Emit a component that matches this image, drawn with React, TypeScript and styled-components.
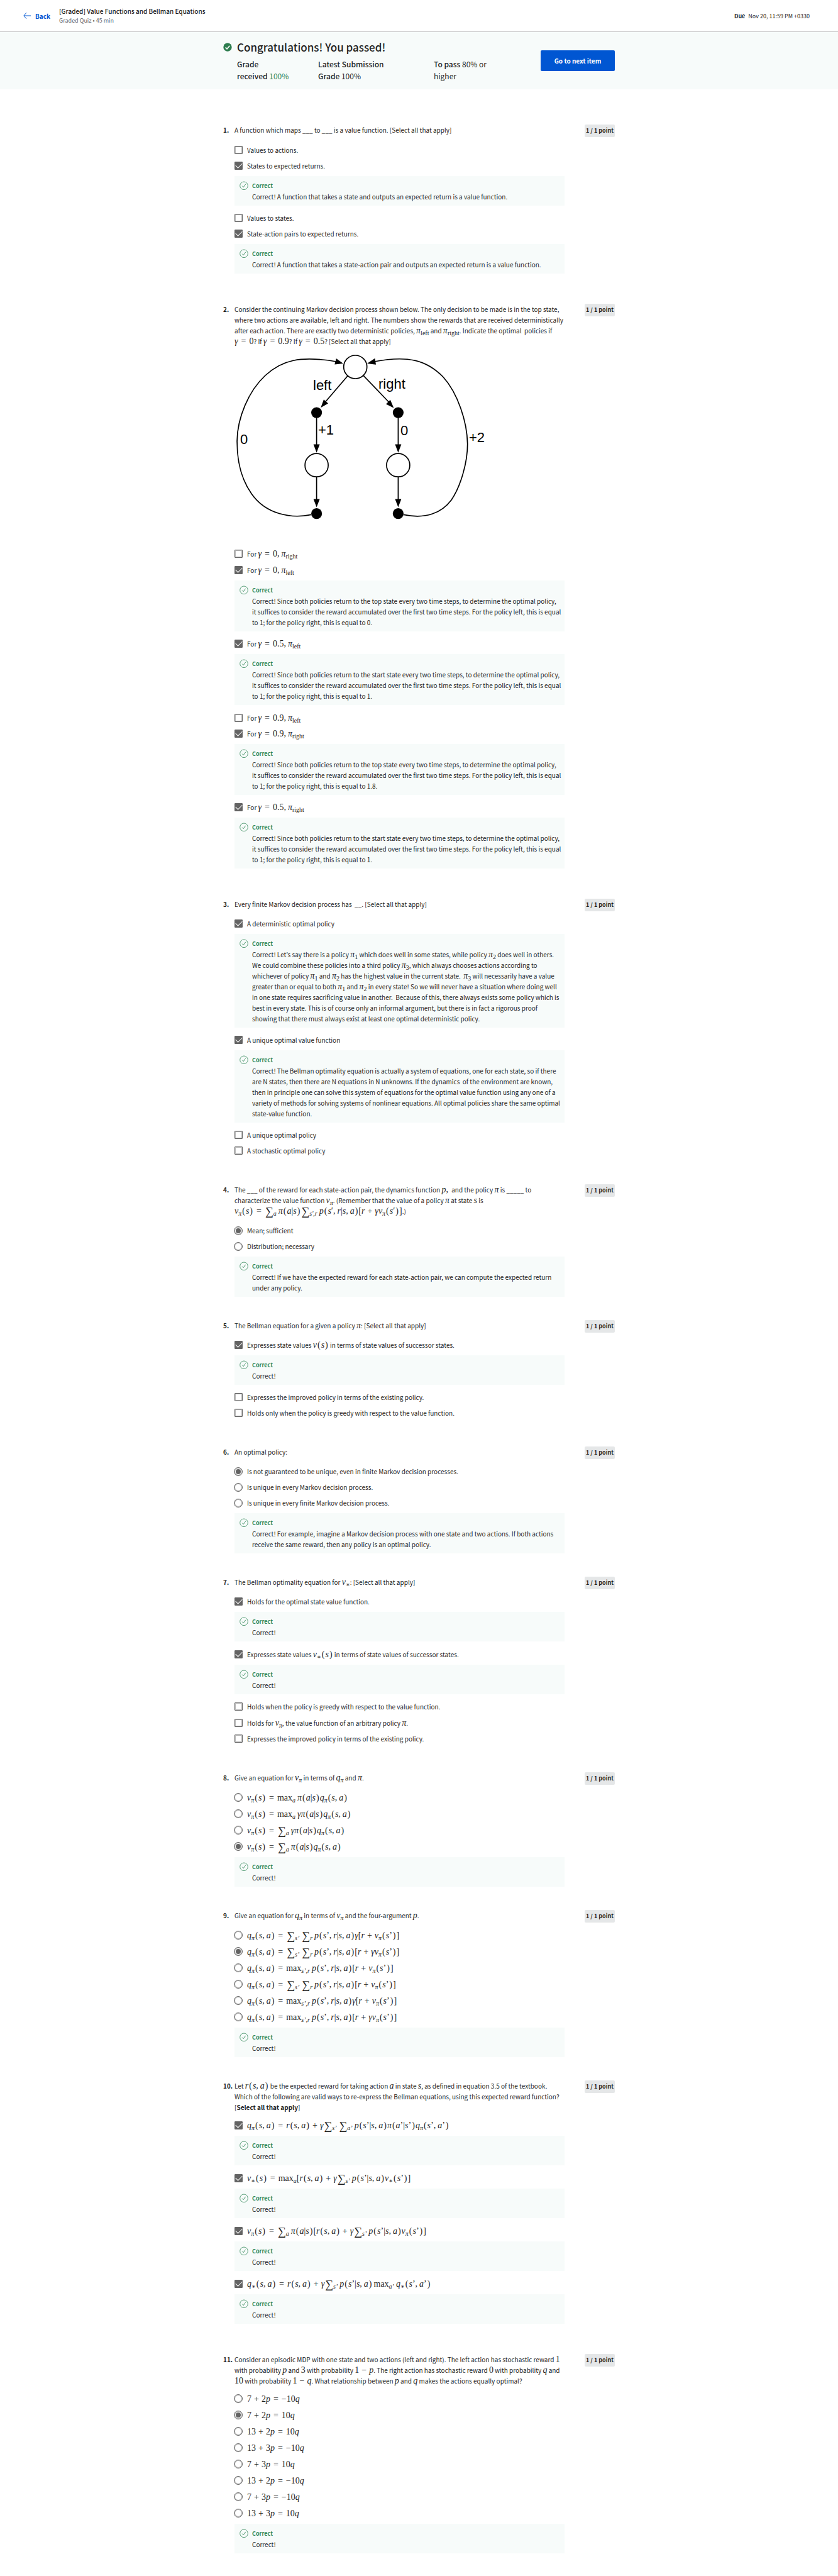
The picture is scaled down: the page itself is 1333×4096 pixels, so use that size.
import React from "react";
import styled, { createGlobalStyle } from "styled-components";

const GlobalStyle = createGlobalStyle`
  * { box-sizing: border-box; }
  body {
    margin: 0;
    background: #fff;
    color: #1f1f1f;
    font-family: "Noto Sans CJK KR", "Open Sans", sans-serif;
    font-size: 10px;
    line-height: 17px;
  }
  h1, h2, p { margin: 0; font-weight: inherit; font-size: inherit; }
`;

/* ---------- header ---------- */

const Header = styled.header`
  display: flex;
  align-items: center;
  height: 51px;
  padding: 0 45px 0 37px;
  border-bottom: 1px solid #bdbdbd;
`;

const BackLink = styled.a`
  display: flex;
  align-items: center;
  gap: 7px;
  margin-right: 14px;
  color: #0056d2;
  font-size: 10px;
  font-weight: 700;
  text-decoration: none;
`;

const Titles = styled.div`
  flex: 1;
  line-height: 15px;
`;

const QuizTitle = styled.h1`
  font-weight: 500;
`;

const QuizMeta = styled.p`
  color: #666;
  font-size: 9px;
`;

const Due = styled.p`
  font-size: 9px;

  strong { margin-right: 3px; }
`;

/* ---------- result banner ---------- */

const Banner = styled.section`
  height: 91px;
  background: #f7fbfa;
`;

const BannerInner = styled.div`
  display: flex;
  align-items: center;
  justify-content: space-between;
  width: 100%;
  max-width: 623px;
  height: 100%;
  margin: 0 auto;
`;

const Result = styled.div`
  display: grid;
  grid-template-columns: 14px auto;
  column-gap: 8px;
  align-items: center;
`;

const ResultTitle = styled.h2`
  font-size: 17px;
  font-weight: 500;
  line-height: 24px;
`;

const Grades = styled.div`
  display: flex;
  grid-column: 2;
  padding-top: 5px;
  font-size: 12px;
  line-height: 19px;
`;

const Grade = styled.p<{ $width: number; $gap: number }>`
  width: ${(p) => p.$width}px;
  margin-right: ${(p) => p.$gap}px;

  strong { font-weight: 500; }
`;

const Passed = styled.span`
  color: #2e8555;
`;

const NextButton = styled.button`
  width: 118px;
  height: 33px;
  border: 0;
  border-radius: 2px;
  background: #0056d2;
  color: #fff;
  font: 700 10px "Noto Sans CJK KR", "Open Sans", sans-serif;
`;

/* ---------- questions ---------- */

const Quiz = styled.main`
  max-width: 623px;
  margin: 0 auto;
  padding: 56px 0 0;
`;

const QuestionGrid = styled.section<{ $gap: number }>`
  display: grid;
  grid-template-columns: 18px minmax(0, 525px) 1fr;
  align-items: start;
  margin-bottom: ${(p) => p.$gap}px;
`;

const Num = styled.span`
  font-weight: 700;
  white-space: nowrap;
`;

const Points = styled.span`
  justify-self: end;
  width: 48px;
  height: 20px;
  border-radius: 2px;
  background: #e5e7e8;
  font-weight: 700;
  font-size: 9px;
  line-height: 20px;
  text-align: center;
  white-space: nowrap;
`;

const Prompt = styled.div<{ $snug?: boolean }>`
  margin-bottom: ${(p) => (p.$snug ? 9 : 12)}px;
`;

const OptionLabel = styled.label<{ $tall?: boolean }>`
  display: flex;
  align-items: center;
  height: ${(p) => (p.$tall ? 26 : 25)}px;
  padding: 2px 0 6px;
  white-space: nowrap;
`;

const CheckInput = styled.input`
  appearance: none;
  display: grid;
  place-items: center;
  flex: none;
  width: 13px;
  height: 13px;
  margin: 0 7px 0 0;
  border: 1px solid #666;
  border-radius: 1px;
  box-shadow: inset 0 0 0 1px #b4b4b4;

  &:checked {
    background: #636363;
    box-shadow: none;
  }

  &:checked::after {
    content: "";
    width: 5px;
    height: 9px;
    margin-top: -3px;
    border: solid #fff;
    border-width: 0 1px 1px 0;
    transform: rotate(45deg);
  }
`;

const RadioInput = styled.input`
  appearance: none;
  display: grid;
  place-items: center;
  flex: none;
  width: 14px;
  height: 14px;
  margin: 0 7px 0 -1px;
  border: 1px solid #666;
  border-radius: 50%;
  box-shadow: inset 0 0 0 1px #b4b4b4;

  &:checked::after {
    content: "";
    width: 8px;
    height: 8px;
    border-radius: 50%;
    background: #636363;
  }
`;

const Feedback = styled.div<{ $spaced: boolean }>`
  display: grid;
  grid-template-columns: 14px 1fr;
  column-gap: 6px;
  margin: 2px 0 ${(p) => (p.$spaced ? 9 : 0)}px;
  padding: 8px 5px 6px 8px;
  background: #f7fbfa;
`;

const FeedbackTitle = styled.p`
  color: #2e8555;
  font-size: 9px;
  font-weight: 700;
  line-height: 16px;
`;

const Diagram = styled.svg`
  display: block;
  width: 402px;
  height: 297px;
  margin-top: 9px;
  font: 22px "Liberation Sans", Arial, sans-serif;
`;

/* ---------- math ---------- */

const Formula = styled.span`
  font-family: "Liberation Serif", "DejaVu Serif", serif;
  font-size: 14px;
  line-height: 0;
  white-space: nowrap;

  sub {
    font-size: 10px;
    line-height: 0;
    vertical-align: -3px;
  }
`;

const Rel = styled.span`
  margin: 0 5px;
`;

const Bin = styled.span`
  margin: 0 4px;
`;

const Comma = styled.span`
  margin-right: 3px;
`;

const Paren = styled.span`
  margin: 0 1px;
`;

const Sum = styled.span`
  margin-left: 1px;
  font-size: 18px;
  vertical-align: -2px;
`;

const MaxAfterFactor = styled.span`
  margin-left: 2px;
`;

const AfterSub = styled.span`
  margin-right: 3px;
`;

/* Sets a compact TeX-like string: letters go italic, _{..} is a subscript,
   S is a summation sign, ~ is a unary minus. */
function Tex({ children }: { children: string }) {
  const parts = children.match(/_\{[^}]*\}|max|\d[\d.]*|[^\s]/g) ?? [];
  let operator = false;
  return (
    <Formula>
      {parts.map((t, i) => {
        if (t.startsWith("_{")) {
          const body = t.slice(2, -1);
          const upright = /^(left|right|\d|∗)$/.test(body);
          const sub = <sub key={i}>{upright ? body : <i>{body}</i>}</sub>;
          const spaced = operator && parts[i + 1] !== "[";
          operator = false;
          return spaced ? <AfterSub key={i}>{sub}</AfterSub> : sub;
        }
        if (t === "S") {
          operator = true;
          return <Sum key={i}>∑</Sum>;
        }
        if (t === "max") {
          operator = true;
          return parts[i - 1] === ")" ? <MaxAfterFactor key={i}>max</MaxAfterFactor> : <span key={i}>max</span>;
        }
        operator = false;
        if (t === "=") return <Rel key={i}>=</Rel>;
        if (t === "+") return <Bin key={i}>+</Bin>;
        if (t === "-") return <Bin key={i}>−</Bin>;
        if (t === "~") return <span key={i}>−</span>;
        if (t === ",") return <Comma key={i}>,</Comma>;
        if (t === "(" || t === ")") return <Paren key={i}>{t}</Paren>;
        if (/[a-zπγ]/.test(t)) return <i key={i}>{t}</i>;
        return <span key={i}>{t}</span>;
      })}
    </Formula>
  );
}

/* ---------- drawings ---------- */

const ArrowLeft = () => (
  <svg width="12" height="12" viewBox="0 0 12 12" fill="none" stroke="#0056d2" aria-hidden="true">
    <path d="M12 6H1M5 1.2L.8 6L5 10.8" />
  </svg>
);

const PassedIcon = () => (
  <svg width="14" height="14" viewBox="0 0 13 13" aria-hidden="true">
    <circle cx="6.5" cy="6.5" r="6.2" fill="#2e7d4f" />
    <path d="M3.4 6.8L5.6 9L9.6 4.4" fill="none" stroke="#fff" strokeWidth="1.5" />
  </svg>
);

const CorrectIcon = () => (
  <svg width="14" height="16" viewBox="0 0 14 16" fill="none" stroke="#2e8555" aria-hidden="true">
    <circle cx="7" cy="7.3" r="6.3" strokeWidth=".8" />
    <path d="M4.2 7.6L6.2 9.6L9.8 4.8" strokeWidth=".9" />
  </svg>
);

const MarkovDiagram = () => (
  <Diagram viewBox="0 0 402 297" role="img" aria-label="Continuing Markov decision process">
    <g fill="none" stroke="#000" strokeWidth="1.7">
      <path d="M122 258.4C90 265 50 258 27 225C8 198 4 165 4.1 141C4.5 105 22 62 49 37C75 13 104 5 162 15" />
      <path d="M269 258.4C305 266 330 255 345 235C360 213 370.7 175 370.7 146C370 110 355 65 332 39.5C305 12 275 5 222 15" />
      <circle cx="192.2" cy="23.5" r="18.5" />
      <circle cx="130.6" cy="179.7" r="18.5" />
      <circle cx="260.4" cy="179.7" r="18.5" />
      <path d="M180 37.8L142 82M205 37.1L249 83M130.6 104V148M260.4 104V148M130.6 198V236M260.4 198V236" />
    </g>
    <g fill="#000">
      <circle cx="130.6" cy="96.1" r="8.6" />
      <circle cx="260.4" cy="96.1" r="8.6" />
      <circle cx="130.6" cy="256.7" r="8.6" />
      <circle cx="260.4" cy="256.7" r="8.6" />
      <path d="M173 17.9L161.8 10.1L159.3 19.5ZM210.9 17.9L223.4 9.8L225 19.8Z" />
      <path d="M137.2 88.3L142 75.3L149 81.5ZM253.4 88.7L247.8 75.8L241 82.4Z" />
      <path d="M130.6 159.8L125.6 146.6H135.6ZM260.4 159.8L255.4 146.6H265.4Z" />
      <path d="M130.6 246.6L125.6 233.4H135.6ZM260.4 246.6L255.4 233.4H265.4Z" />
      <text x="125" y="60">left</text>
      <text x="229" y="58">right</text>
      <text x="133" y="131">+1</text>
      <text x="264" y="132">0</text>
      <text x="9" y="146">0</text>
      <text x="373" y="143">+2</text>
    </g>
  </Diagram>
);

/* ---------- building blocks ---------- */

interface Option {
  text: React.ReactNode;
  on?: boolean;
  tall?: boolean;
  note?: React.ReactNode;
}

interface Question {
  kind: "checkbox" | "radio";
  prompt: React.ReactNode;
  snug?: boolean;
  options: Option[];
  note?: React.ReactNode;
}

const Note = ({ spaced, children }: { spaced: boolean; children: React.ReactNode }) => (
  <Feedback $spaced={spaced}>
    <CorrectIcon />
    <div>
      <FeedbackTitle>Correct</FeedbackTitle>
      <p>{children}</p>
    </div>
  </Feedback>
);

const QuestionItem = ({ q, index }: { q: Question; index: number }) => (
  <QuestionGrid $gap={q.kind === "radio" ? 37 : 39}>
    <Num>{index}.</Num>
    <div>
      <Prompt $snug={q.snug}>{q.prompt}</Prompt>
      {q.options.map((o, i) => (
        <React.Fragment key={i}>
          <OptionLabel $tall={o.tall}>
            {q.kind === "checkbox" ? (
              <CheckInput type="checkbox" defaultChecked={o.on} />
            ) : (
              <RadioInput type="radio" name={`q${index}`} defaultChecked={o.on} />
            )}
            <span>{o.text}</span>
          </OptionLabel>
          {o.note && <Note spaced>{o.note}</Note>}
        </React.Fragment>
      ))}
      {q.note && <Note spaced={false}>{q.note}</Note>}
    </div>
    <Points>1 / 1 point</Points>
  </QuestionGrid>
);

const twoStep = (where: string, right: string) =>
  `Correct! Since both policies return to the ${where} state every two time steps, to determine the optimal policy, it suffices to consider the reward accumulated over the first two time steps. For the policy left, this is equal to 1; for the policy right, this is equal to ${right}.`;

const gammaOption = (gamma: string, side: string) => (
  <>
    For <Tex>{`γ=${gamma},π_{${side}}`}</Tex>
  </>
);

const formulas = (list: string[], chosen: number): Option[] =>
  list.map((f, i) => ({ text: <Tex>{f}</Tex>, on: i === chosen, tall: true }));

const questions: Question[] = [
  {
    kind: "checkbox",
    prompt: <>A function which maps ___ to ___ is a value function. [Select all that apply]</>,
    options: [
      { text: "Values to actions.", tall: true },
      {
        text: "States to expected returns.",
        on: true,
        note: "Correct! A function that takes a state and outputs an expected return is a value function.",
      },
      { text: "Values to states." },
      {
        text: "State-action pairs to expected returns.",
        on: true,
        note: "Correct! A function that takes a state-action pair and outputs an expected return is a value function.",
      },
    ],
  },
  {
    kind: "checkbox",
    prompt: (
      <>
        Consider the continuing Markov decision process shown below. The only decision to be made is in the top state,
        where two actions are available, left and right. The numbers show the rewards that are received
        deterministically after each action. There are exactly two deterministic policies, <Tex>{"π_{left}"}</Tex> and{" "}
        <Tex>{"π_{right}"}</Tex>. Indicate the optimal&nbsp; policies if <br />
        <Tex>γ=0</Tex>? If <Tex>γ=0.9</Tex>? If <Tex>γ=0.5</Tex>? [Select all that apply]
        <MarkovDiagram />
      </>
    ),
    options: [
      { text: gammaOption("0", "right"), tall: true },
      { text: gammaOption("0", "left"), tall: true, on: true, note: twoStep("top", "0") },
      { text: gammaOption("0.5", "left"), on: true, note: twoStep("start", "1") },
      { text: gammaOption("0.9", "left"), tall: true },
      { text: gammaOption("0.9", "right"), on: true, note: twoStep("top", "1.8") },
      { text: gammaOption("0.5", "right"), on: true, note: twoStep("start", "1") },
    ],
  },
  {
    kind: "checkbox",
    prompt: <>Every finite Markov decision process has&nbsp; __. [Select all that apply]</>,
    options: [
      {
        text: "A deterministic optimal policy",
        on: true,
        note: (
          <>
            Correct! Let’s say there is a policy <Tex>{"π_{1}"}</Tex> which does well in some states, while policy{" "}
            <Tex>{"π_{2}"}</Tex> does well in others. We could combine these policies into a third policy{" "}
            <Tex>{"π_{3}"}</Tex>, which always chooses actions according to <br />
            whichever of policy <Tex>{"π_{1}"}</Tex> and <Tex>{"π_{2}"}</Tex> has the highest value in the current
            state.&nbsp; <Tex>{"π_{3}"}</Tex> will necessarily have a value greater than or equal to both{" "}
            <Tex>{"π_{1}"}</Tex> and <Tex>{"π_{2}"}</Tex> in every state! So we will never have a situation where doing
            well in one state requires sacrificing value in another.&nbsp; Because of this, there always exists some
            policy which is best in every state. This is of course only an informal argument, but there is in fact a
            rigorous proof showing that there must always exist at least one optimal deterministic policy.
          </>
        ),
      },
      {
        text: "A unique optimal value function",
        on: true,
        note: (
          <>
            Correct! The Bellman optimality equation is actually a system of equations, one for each state, so if there
            are N states, then there are N equations in N unknowns. If the dynamics&nbsp; of the environment are known,
            then in principle one can solve this system of equations for the optimal value function using any one of a
            variety of methods for solving systems of nonlinear equations. All optimal policies share the same optimal
            state-value function.
          </>
        ),
      },
      { text: "A unique optimal policy" },
      { text: "A stochastic optimal policy" },
    ],
  },
  {
    kind: "radio",
    prompt: (
      <>
        The ___ of the reward for each state-action pair, the dynamics function <Tex>p,</Tex> and the policy{" "}
        <Tex>π</Tex> is _____ to <br />
        characterize the value function <Tex>{"v_{π}"}</Tex>. (Remember that the value of a policy <Tex>π</Tex> at state{" "}
        <Tex>s</Tex> is <br />
        <Tex>{"v_{π}(s)=S_{a}π(a|s)S_{s′,r}p(s′,r|s,a)[r+γv_{π}(s′)]"}</Tex>.)
      </>
    ),
    options: [{ text: "Mean; sufficient", on: true }, { text: "Distribution; necessary" }],
    note: "Correct! If we have the expected reward for each state-action pair, we can compute the expected return under any policy.",
  },
  {
    kind: "checkbox",
    prompt: (
      <>
        The Bellman equation for a given a policy <Tex>π</Tex>: [Select all that apply]
      </>
    ),
    options: [
      {
        text: (
          <>
            Expresses state values <Tex>v(s)</Tex> in terms of state values of successor states.
          </>
        ),
        on: true,
        note: "Correct!",
      },
      { text: "Expresses the improved policy in terms of the existing policy." },
      { text: "Holds only when the policy is greedy with respect to the value function." },
    ],
  },
  {
    kind: "radio",
    prompt: <>An optimal policy:</>,
    options: [
      { text: "Is not guaranteed to be unique, even in finite Markov decision processes.", on: true },
      { text: "Is unique in every Markov decision process." },
      { text: "Is unique in every finite Markov decision process." },
    ],
    note: "Correct! For example, imagine a Markov decision process with one state and two actions. If both actions receive the same reward, then any policy is an optimal policy.",
  },
  {
    kind: "checkbox",
    prompt: (
      <>
        The Bellman optimality equation for <Tex>{"v_{∗}"}</Tex>: [Select all that apply]
      </>
    ),
    options: [
      { text: "Holds for the optimal state value function.", on: true, note: "Correct!" },
      {
        text: (
          <>
            Expresses state values <Tex>{"v_{∗}(s)"}</Tex> in terms of state values of successor states.
          </>
        ),
        on: true,
        tall: true,
        note: "Correct!",
      },
      { text: "Holds when the policy is greedy with respect to the value function." },
      {
        text: (
          <>
            Holds for <Tex>{"v_{π}"}</Tex>, the value function of an arbitrary policy <Tex>π</Tex>.
          </>
        ),
        tall: true,
      },
      { text: "Expresses the improved policy in terms of the existing policy." },
    ],
  },
  {
    kind: "radio",
    prompt: (
      <>
        Give an equation for <Tex>{"v_{π}"}</Tex> in terms of <Tex>{"q_{π}"}</Tex> and <Tex>π</Tex>.
      </>
    ),
    options: formulas(
      [
        "v_{π}(s)=max_{a}π(a|s)q_{π}(s,a)",
        "v_{π}(s)=max_{a}γπ(a|s)q_{π}(s,a)",
        "v_{π}(s)=S_{a}γπ(a|s)q_{π}(s,a)",
        "v_{π}(s)=S_{a}π(a|s)q_{π}(s,a)",
      ],
      3
    ),
    note: "Correct!",
  },
  {
    kind: "radio",
    prompt: (
      <>
        Give an equation for <Tex>{"q_{π}"}</Tex> in terms of <Tex>{"v_{π}"}</Tex> and the four-argument <Tex>p</Tex>.
      </>
    ),
    options: formulas(
      [
        "q_{π}(s,a)=S_{s’}S_{r}p(s’,r|s,a)γ[r+v_{π}(s’)]",
        "q_{π}(s,a)=S_{s’}S_{r}p(s’,r|s,a)[r+γv_{π}(s’)]",
        "q_{π}(s,a)=max_{s’,r}p(s’,r|s,a)[r+v_{π}(s’)]",
        "q_{π}(s,a)=S_{s’}S_{r}p(s’,r|s,a)[r+v_{π}(s’)]",
        "q_{π}(s,a)=max_{s’,r}p(s’,r|s,a)γ[r+v_{π}(s’)]",
        "q_{π}(s,a)=max_{s’,r}p(s’,r|s,a)[r+γv_{π}(s’)]",
      ],
      1
    ),
    note: "Correct!",
  },
  {
    kind: "checkbox",
    snug: true,
    prompt: (
      <>
        Let <Tex>r(s,a)</Tex> be the expected reward for taking action <Tex>a</Tex> in state <Tex>s</Tex>, as defined in
        equation 3.5 of the textbook. <br />
        Which of the following are valid ways to re-express the Bellman equations, using this expected reward function?{" "}
        <br />[<b>Select all that apply</b>]
      </>
    ),
    options: [
      "q_{π}(s,a)=r(s,a)+γS_{s’}S_{a’}p(s’|s,a)π(a’|s’)q_{π}(s’,a’)",
      "v_{∗}(s)=max_{a}[r(s,a)+γS_{s’}p(s’|s,a)v_{∗}(s’)]",
      "v_{π}(s)=S_{a}π(a|s)[r(s,a)+γS_{s’}p(s’|s,a)v_{π}(s’)]",
      "q_{∗}(s,a)=r(s,a)+γS_{s’}p(s’|s,a)max_{a’}q_{∗}(s’,a’)",
    ].map((f) => ({ text: <Tex>{f}</Tex>, on: true, tall: true, note: "Correct!" })),
  },
  {
    kind: "radio",
    snug: true,
    prompt: (
      <>
        Consider an episodic MDP with one state and two actions (left and right). The left action has stochastic reward{" "}
        <Tex>1</Tex> with probability <Tex>p</Tex> and <Tex>3</Tex> with probability <Tex>1-p</Tex>. The right action has
        stochastic reward <Tex>0</Tex> with probability <Tex>q</Tex> and <Tex>10</Tex> with probability{" "}
        <Tex>1-q</Tex>. What relationship between <Tex>p</Tex> and <Tex>q</Tex> makes the actions equally optimal?
      </>
    ),
    options: formulas(
      ["7+2p=~10q", "7+2p=10q", "13+2p=10q", "13+3p=~10q", "7+3p=10q", "13+2p=~10q", "7+3p=~10q", "13+3p=10q"],
      1
    ),
    note: "Correct!",
  },
];

export default function App() {
  return (
    <>
      <GlobalStyle />
      <Header>
        <BackLink href="#">
          <ArrowLeft />
          Back
        </BackLink>
        <Titles>
          <QuizTitle>[Graded] Value Functions and Bellman Equations</QuizTitle>
          <QuizMeta>Graded Quiz • 45 min</QuizMeta>
        </Titles>
        <Due>
          <strong>Due</strong> Nov 20, 11:59 PM +0330
        </Due>
      </Header>
      <Banner>
        <BannerInner>
          <Result>
            <PassedIcon />
            <ResultTitle>Congratulations! You passed!</ResultTitle>
            <Grades>
              <Grade $width={97} $gap={32}>
                <strong>
                  Grade <br />
                  received
                </strong>{" "}
                <Passed>100%</Passed>
              </Grade>
              <Grade $width={120} $gap={64}>
                <strong>Latest Submission Grade</strong> 100%
              </Grade>
              <Grade $width={96} $gap={0}>
                <strong>To pass</strong> 80% or higher
              </Grade>
            </Grades>
          </Result>
          <NextButton type="button">Go to next item</NextButton>
        </BannerInner>
      </Banner>
      <Quiz>
        {questions.map((q, i) => (
          <QuestionItem key={i} q={q} index={i + 1} />
        ))}
      </Quiz>
    </>
  );
}
